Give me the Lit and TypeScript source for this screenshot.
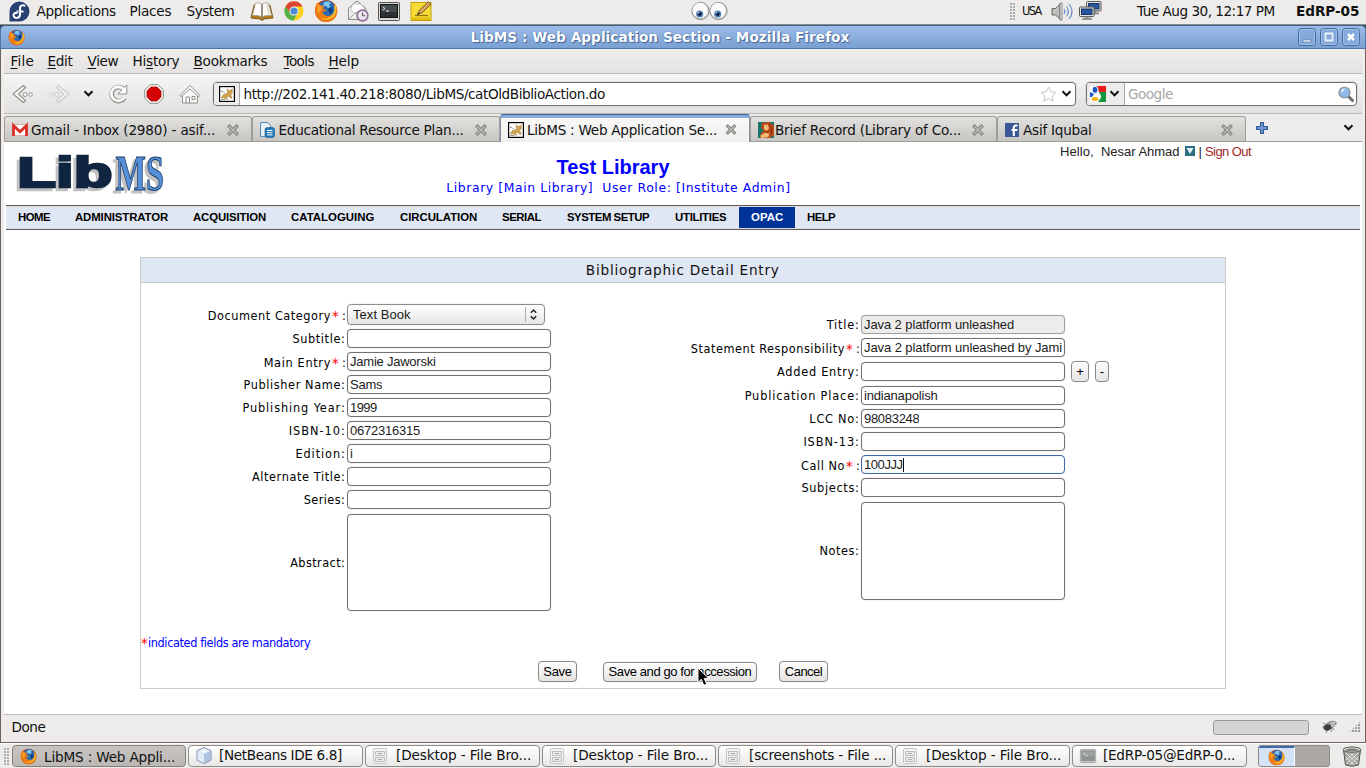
import { LitElement, html, svg, css, nothing, TemplateResult } from "lit";
import { customElement } from "lit/decorators.js";

const FONTS: Record<string, string> = {
  ui: '13.6px "DejaVu Sans"',
  uib: 'bold 13.6px "DejaVu Sans"',
  sub: '12.4px "DejaVu Sans"',
  cond: '12.6px "DejaVu Sans Condensed"',
  arial: '13px "Liberation Sans"',
  nav: 'bold 11.4px "Liberation Sans"',
  big: 'bold 20px "Liberation Sans"',
};

const pen = document.createElement("canvas").getContext("2d")!;

/* One run of text, tracked so that its glyphs span exactly `width` pixels. */
function run(text: string, width: number, font: string, body: unknown = text) {
  pen.font = FONTS[font];
  const m = pen.measureText(text);
  const ink = m.actualBoundingBoxRight + m.actualBoundingBoxLeft;
  const gap = text.length > 1 ? (width - ink) / (text.length - 1) : 0;
  return html`<span class="run ${font}" style="letter-spacing:${gap.toFixed(3)}px;margin-left:${m.actualBoundingBoxLeft.toFixed(2)}px">${body}</span>`;
}

/* A fixed-width cell of a bar. */
const cell = (w: number, body: unknown = nothing) =>
  html`<span class="cell" style="width:${w}px">${body}</span>`;

const icon = (w: number, h: number, body: TemplateResult, vb = `0 0 ${w} ${h}`) =>
  html`<svg class="icon" width=${w} height=${h} viewBox=${vb}>${body}</svg>`;

const firefox = (s: number) => icon(s, s, svg`
  <circle cx="12" cy="12" r="11" fill="#c8420c"/>
  <circle cx="12.6" cy="9.8" r="8.4" fill="#2a6cb4"/>
  <path d="M10 3.500q4-2 7 .4l-2 2 1.500 2-2.500 1-2-2-3 0z" fill="#7fc4ee"/>
  <path d="M14 10l4-2 1 4-3 3z" fill="#123c80"/>
  <path d="M3.200 3.500C.4 8 .2 15 4 19.400c4.500 5 13.500 4.600 17.300-.8 3-4.400 2.700-10-.5-13.600 1 3.500.7 6.500-.8 8.500-1.500 2.700-4.500 4-7.500 3.300-3-.7-4.300-2.800-3.800-4.800 1.300.8 3 .5 3.800-.8l-3.500-1.700 1.200-2.500-3.200-.6z" fill="#ee7b12"/>
  <path d="M21.500 6c1.800 5 .5 10.500-4 13.300-3.500 2-8 1.700-11-.6 4.500 1.600 9.500.6 12-3.200 1.800-2.600 2.500-5.500 1.500-8.500z" fill="#fbbf2c"/>
  <path d="M3.500 5.500l3.200 1.500.8 2.200-1.500 3-2.500 2z" fill="#f6a22b"/>`, "0 0 24 24");

const fedora = icon(21, 21, svg`
  <path d="M10.500.5a10 10 0 0 1 0 20H.5v-10a10 10 0 0 1 10-10z" fill="#294172"/>
  <path d="M16 5.300C14.500 3.500 11 4 11 7.300v6c0 5-6.500 4.200-6.500 1 0-2.600 3-2.800 4.200-2.100M7.500 10.600h7" fill="none" stroke="#fff" stroke-width="2"/>
  <path d="M8 10.600h3" stroke="#9db8dd" stroke-width="1.500"/>`);

const book = icon(24, 20, svg`
  <path d="M1 17L4 4h16l3 13-9 1-2 1.500-2-1.500z" fill="#b07a1c" stroke="#6b480c" stroke-width=".8"/>
  <path d="M2.500 14.500L5.500 2q4-1 6.500 1.300Q14.500 1 18.500 2l3 12.500q-6-1-9.500 1.700-3.500-2.700-9.500-1.700z" fill="#fbfaf6" stroke="#a49c86" stroke-width=".7"/>
  <path d="M6 3.500q3-.8 5 .6v10.500q-3-1.500-7-1z" fill="#fff"/>
  <path d="M12 3.300v13" stroke="#6c6450" stroke-width="1.400"/>
  <path d="M17 2l2 11.500" stroke="#cfcabb" stroke-width="1"/>`);

const chrome = icon(20, 20, svg`
  <circle cx="10" cy="10" r="9.500" fill="#fbd11a"/>
  <path d="M1.500 5.500A9.500 9.500 0 0 1 18.400 5.500H10L6 12z" fill="#df4432"/>
  <path d="M1.500 5.500A9.500 9.500 0 0 0 9.500 19.500L13.700 12 6.200 12z" fill="#54b048"/>
  <circle cx="10" cy="10" r="4.600" fill="#f3f3f3"/><circle cx="10" cy="10" r="3.600" fill="#4a88d0"/>`);

const mail = icon(22, 22, svg`
  <path d="M1.500 8.500L9 1.500h2l8 7v11h-17.500z" fill="#eeeeec" stroke="#888a85"/>
  <path d="M4 8l2-4h8l3 4v4l-6 3-7-4z" fill="#fff" stroke="#b5b5b2" stroke-width=".8"/>
  <path d="M2 19l6.500-6.500h4L18 19" fill="none" stroke="#a5a7a3"/>
  <circle cx="15.500" cy="15.500" r="5.400" fill="#ece6ef" stroke="#8c6f93" stroke-width="1.600"/>
  <path d="M15.500 12.500v3.200h2.700" fill="none" stroke="#555" stroke-width="1"/>`);

const terminal = (w = 22, h = 19, dim = false) => icon(w, h, svg`
  <rect x=".5" y=".5" width="21" height="18" rx="1" fill=${dim ? "#c5c6c3" : "#d8d9d6"} stroke=${dim ? "#9a9b98" : "#555753"}/>
  <rect x="2.500" y="2.500" width="17" height="13" fill=${dim ? "#8c9391" : "#2c3233"} stroke=${dim ? "#888" : "#111"}/>
  <path d="M3 10h16V3H3z" fill=${dim ? "#9aa19f" : "#454d4e"}/>
  <path d="M5 5l2 1.500L5 8M8 9h3" fill="none" stroke="#eee" stroke-width="1"/>`, "0 0 22 19");

const note = icon(23, 21, svg`
  <rect x="1" y="1.500" width="20" height="18" fill="#f6dc35" stroke="#c3a106"/>
  <path d="M1.500 16.500h19v2.500h-19z" fill="#e3bd12"/>
  <path d="M5 14.500h13" stroke="#8b7513" stroke-width="1.300"/>
  <path d="M7.500 13.500l2-4.500L18.500.8l2.500 2.400-9 8.500z" fill="#d9a760" stroke="#6b4a14" stroke-width=".9"/>
  <path d="M7.300 13.700l1-2.200 1.300 1.200z" fill="#222"/>`);

const eyes = icon(38, 20, svg`${[9.500, 27.500].map((x) => svg`
  <circle cx=${x} cy="10" r="8.600" fill="#cfcfcd" stroke="#8b8b88"/>
  <circle cx=${x - 0.4} cy="9.400" r="7.600" fill="#fbfbfa"/>
  <circle cx=${x - 0.8} cy="13" r="3.600" fill="#5583bd"/>
  <circle cx=${x - 0.8} cy="13" r="2" fill="#10213c"/>
  <circle cx=${x - 2} cy="11.800" r=".8" fill="#e7eef8"/>`)}`);

const speaker = icon(22, 19, svg`
  <path d="M1 6.500h3.500L9 2v15l-4.500-4H1z" fill="#bfc0bd" stroke="#666863"/>
  <path d="M9 1h2v17H9z" fill="#f2f2f0" stroke="#777974" stroke-width=".9"/>
  <path d="M13 7q2 2.500 0 5M15.500 4.500q3.800 5 0 10M18 2q6 7.500 0 15" fill="none" stroke="#6d93c7" stroke-width="1.200"/>`);

const network = icon(23, 20, svg`${[[7, 0], [0, 5.5]].map(([x, y]) => svg`<g transform="translate(${x} ${y})">
  <rect x=".5" y=".5" width="14.500" height="9.500" rx="1" fill="#e4e4e1" stroke="#555753"/>
  <rect x="2.500" y="2.500" width="10.500" height="5.500" fill="#2b55a0" stroke="#173468"/>
  <path d="M3 12.500h10M5.500 10.500h5" stroke="#777974" stroke-width="1.500"/></g>`)}`);

const chevron = icon(11, 7, svg`<path d="M1.500 1.300l4 4 4-4" fill="none" stroke="#111" stroke-width="2"/>`);

const backArrow = svg`
  <path d="M12.500 1.500L2 10l10.500 8.500L14.500 16.500 7.500 10l7-6.500z" fill="#fbfbfa" stroke="#8e908b" stroke-width="1.100" stroke-linejoin="round"/>
  <circle cx="14" cy="10.500" r="2" fill="#fff" stroke="#8e908b"/><circle cx="19.500" cy="10.500" r="1.800" fill="#fff" stroke="#8e908b"/>`;
const back = icon(23, 20, backArrow);
const forward = icon(23, 20, svg`<g transform="translate(23 0) scale(-1 1)" opacity=".35">${backArrow}</g>`);

const reload = icon(20, 20, svg`
  <path d="M15.500 5A7 7 0 1 0 16.500 14" fill="none" stroke="#8e908b" stroke-width="4.800"/>
  <path d="M18.800 1v9h-9z" fill="#fff" stroke="#8e908b" stroke-linejoin="round"/>
  <path d="M15.500 5A7 7 0 1 0 16.200 13.600" fill="none" stroke="#fbfbfa" stroke-width="2.800"/>`);

const stop = icon(20, 20, svg`
  <path d="M6 .7h8L19.300 6v8L14 19.300H6L.7 14V6z" fill="#f6f6f5" stroke="#8e908b"/>
  <path d="M7 3h6l4 4v6l-4 4H7l-4-4V7z" fill="#d40404" stroke="#a50000" stroke-width=".7"/>`);

const home = icon(22, 20, svg`
  <path d="M3.500 10v9h15v-9L11 3.500z" fill="#fafaf9" stroke="#8e908b"/>
  <path d="M1 11.500L11 1.500l10 10-1.500 1L11 4.800 2.500 12.500z" fill="#fff" stroke="#8e908b" stroke-linejoin="round"/>
  <path d="M7 19v-6h3.500v6M13 12.500h3v3h-3z" fill="none" stroke="#8e908b"/>`);

const tomcat = icon(16, 16, svg`
  <rect x=".6" y=".6" width="14.800" height="14.800" fill="#fff" stroke="#000" stroke-width="1.200"/>
  <path d="M2 12l2.500-3.500L8 7.500 8.500 6 8 2.800l1.800 1.400h1.700l1.700-1.400.2 4.200-1.600 1.500 1.400 3.500-1.200.4-2.500-2-2.500.4 2 2.200-1.500.3-3-1.500z" fill="#d2a44e" stroke="#8a6a30" stroke-width=".4"/>
  <path d="M1.500 5q3 0 4 2M2 13.500h4" stroke="#777" stroke-width=".8" fill="none"/>`);

const gmail = icon(16, 12, svg`
  <rect x=".5" y=".5" width="15" height="11" fill="#fff" stroke="#d9b2ae"/>
  <path d="M1.500 12V1.500L8 7.800l6.500-6.300V12" fill="none" stroke="#da2f27" stroke-width="2.800"/>`);

const docs = icon(15, 16, svg`
  <path d="M.6.600h7l3 3v10.800h-10z" fill="#eef5fa" stroke="#4b87b4"/>
  <rect x="5" y="5.500" width="9.500" height="10" rx="2" fill="#2379b6" stroke="#155c92" stroke-width=".6"/>
  <path d="M7 8.500h5.500M7 10.700h5.500M7 12.900h5.500" stroke="#fff" stroke-width="1"/>`);

const loc = icon(16, 16, svg`
  <rect width="16" height="16" fill="#19746c"/>
  <path d="M4 1l7-1 5 4v9l-4 3H2l1-5 3-3-3-2z" fill="#c04a16"/>
  <path d="M6 3l3.500-.5 1.500 3.500-2.500 3-2.500-2zM2 14l6-4 4 1-2 4-6 1z" fill="#f3bd78"/>
  <path d="M11 2l3 5-2 6M7 10l4 1" stroke="#7a2407" fill="none"/>`);

const facebook = icon(14, 14, svg`
  <rect width="14" height="14" fill="#3b5998"/>
  <path d="M12.500 2.500H11q-2.200 0-2.200 2.500V13M6.500 7h6" stroke="#fff" stroke-width="2" fill="none"/>`);

const closeTab = icon(12, 12, svg`
  <path d="M2.500 2.500l7 7M9.500 2.500l-7 7" stroke="#858682" stroke-width="3.400" stroke-linecap="square"/>
  <path d="M2.500 2.500l7 7M9.500 2.500l-7 7" stroke="#bfbfbc" stroke-width="1.200" stroke-linecap="square"/>`);

const plus = icon(12, 12, svg`<path d="M4.500.5h3v4h4v3h-4v4h-3v-4h-4v-3h4z" fill="#6d9bd4" stroke="#244f91"/>`);

const star = icon(17, 16, svg`<path d="M8.500 1l2.200 4.800 5.200.6-3.800 3.600 1 5.200-4.600-2.600-4.600 2.600 1-5.200L1 6.400l5.200-.6z" fill="#fff" stroke="#c3c3c1"/>`);

const google = icon(16, 16, svg`
  <rect width="16" height="16" fill="#fff"/>
  <path d="M6 0h10v6H9z" fill="#ea1c1c"/><path d="M9 6h7v10H8l3-5z" fill="#12963f"/>
  <path d="M0 6l4 2-2 3H0z" fill="#1657c4"/>
  <path d="M5 7.500q7 1 4 5" stroke="#fff" stroke-width="2.200" fill="none"/>
  <ellipse cx="5" cy="3.800" rx="3" ry="3.600" fill="#1657c4" stroke="#fff"/>
  <ellipse cx="5" cy="13" rx="4" ry="2.600" fill="#f5b312" stroke="#fff"/>`);

const glass = icon(16, 16, svg`
  <path d="M10.500 10.500l4 4" stroke="#6b6d68" stroke-width="3" stroke-linecap="round"/>
  <circle cx="6.500" cy="6.500" r="5.500" fill="#8fb9ea" stroke="#8e908b" stroke-width="1.200"/>
  <path d="M3.500 6q.5-2.500 3-2.700" stroke="#fff" fill="none" stroke-width="1.300"/>`);

const netbeans = icon(16, 17, svg`
  <path d="M8 .7l7 3v9.500l-7 3.300-7-3.300V3.700z" fill="#c9daec" stroke="#7988a8"/>
  <path d="M1.500 4L8 7v9l-6.500-3z" fill="#dfeaf5"/><path d="M8 7l6.500-3v9L8 16z" fill="#adc4de"/>
  <path d="M2 3.800L8 1.500l6 2.300L8 6.500z" fill="#eef5fb"/>`);

const cabinet = icon(14, 16, svg`
  <rect x=".5" y=".5" width="13" height="15" rx="1" fill="#f4f4f3" stroke="#c4c5c2"/>
  <path d="M2.500 3.500h9v4h-9zM2.500 9.500h9v4h-9z" fill="#eaeae8" stroke="#bcbdba"/>
  <path d="M5 5.500h4M5 11.500h4" stroke="#a9aaa7" stroke-width="1.200"/>`);

const bug = icon(17, 14, svg`
  <path d="M1 7l5-1M2 3l4 2M5 13l2-4M10 12l1-4M13 10l-2-3" stroke="#8c8c8c" fill="none"/>
  <ellipse cx="10" cy="4.500" rx="5.500" ry="3" transform="rotate(-18 10 4.500)" fill="#9b9c9a" stroke="#77787a" stroke-width=".6"/>
  <ellipse cx="6.500" cy="7.500" rx="4" ry="3" transform="rotate(-15 6.500 7.500)" fill="#3c3c3c"/>
  <path d="M9 4l5-1.500M10 6l4-1" stroke="#e2e2e2"/>`);

const trash = icon(20, 21, svg`
  <path d="M1.500 4l2 15q6.500 2.400 13 0l2-15z" fill="#a3a5a0" stroke="#555753"/>
  <path d="M4 7l12 11M4 11l8 8M7 6l9 8M16 7L4 18M16 11l-8 8M13 6l-9 8" stroke="#e9eae8" stroke-width=".9"/>
  <ellipse cx="10" cy="3.600" rx="9" ry="2.600" fill="#d6d7d4" stroke="#555753"/>
  <ellipse cx="10" cy="3.800" rx="6.500" ry="1.300" fill="#777974"/>`);

const grip = html`<i class="grip"></i>`;

const winButton = (glyph: TemplateResult) => icon(18, 18, svg`
  <rect x=".5" y=".5" width="17" height="17" rx="3" fill="#84a9da" stroke="#44699c"/>
  <rect x="1.500" y="1.500" width="15" height="15" rx="2" fill="none" stroke="#a3c0e8"/>${glyph}`);

const logo = html`<svg class="logo" width="160" height="50" viewBox="0 0 160 50">
  <text class="lib" transform="translate(1.300 33.500) scale(1.510 1)" fill="#10253f" stroke="#10253f" stroke-width="2.400">Lib</text>
  <text class="ms" transform="translate(99.500 37) scale(.645 1)" fill="#5590d8" stroke="#1b3a66" stroke-width="1">MS</text></svg>`;

const NAV: [string, number, number][] = [
  ["HOME", 57, 33], ["ADMINISTRATOR", 118, 93], ["ACQUISITION", 98, 73], ["CATALOGUING", 109, 83.5],
  ["CIRCULATION", 102, 77], ["SERIAL", 65, 39.5], ["SYSTEM SETUP", 108, 83], ["UTILITIES", 76, 52],
  ["OPAC", 56, 32], ["HELP", 53, 29],
];

interface Field { label: string; w: number; star?: boolean; value?: string; vw?: number; kind?: string }

const LEFT: Field[] = [
  { label: "Document Category", w: 122, star: true, value: "Text Book", vw: 58, kind: "select" },
  { label: "Subtitle", w: 48 },
  { label: "Main Entry", w: 66, star: true, value: "Jamie Jaworski", vw: 86 },
  { label: "Publisher Name", w: 96, value: "Sams", vw: 33 },
  { label: "Publishing Year", w: 97, value: "1999", vw: 27 },
  { label: "ISBN-10", w: 50, value: "0672316315", vw: 70 },
  { label: "Edition", w: 43.5, value: "i", vw: 1 },
  { label: "Alternate Title", w: 88.5 },
  { label: "Series", w: 37 },
  { label: "Abstract", w: 51, kind: "area" },
];

const RIGHT: Field[] = [
  { label: "Title", w: 28.5, value: "Java 2 platform unleashed", vw: 150, kind: "off" },
  { label: "Statement Responsibility", w: 154, star: true, value: "Java 2 platform unleashed by Jamie", vw: 205 },
  { label: "Added Entry", w: 77.5, kind: "add" },
  { label: "Publication Place", w: 108.5, value: "indianapolish", vw: 73.5 },
  { label: "LCC No", w: 44, value: "98083248", vw: 55.5 },
  { label: "ISBN-13", w: 49.5 },
  { label: "Call No", w: 43.5, star: true, value: "100JJJ", vw: 38.5, kind: "focus" },
  { label: "Subjects", w: 53 },
  { label: "Notes", w: 34, kind: "area" },
];

const TABS: [TemplateResult, number, string, number, number][] = [
  [gmail, 248, "Gmail - Inbox (2980) - asif...", 183, 19],
  [docs, 248, "Educational Resource Plan...", 183, 19.5],
  [tomcat, 250, "LibMS : Web Application Se...", 188, 20],
  [loc, 247, "Brief Record (Library of Co...", 184, 18],
  [facebook, 249, "Asif Iqubal", 68, 18],
];

const TASKS: [TemplateResult, number, string, number, number][] = [
  [firefox(17), 174, "LibMS : Web Appli...", 129, 24.5],
  [netbeans, 175, "[NetBeans IDE 6.8]", 122, 23.5],
  [cabinet, 175, "[Desktop - File Bro...", 133, 23.5],
  [cabinet, 174, "[Desktop - File Bro...", 133, 23.5],
  [cabinet, 175, "[screenshots - File ...", 135, 23.5],
  [cabinet, 175, "[Desktop - File Bro...", 133, 23.5],
  [terminal(16, 14, true), 175, "[EdRP-05@EdRP-0...", 130, 23.5],
];

@customElement("app-root")
export class AppRoot extends LitElement {
  static styles = css`
    :host { display: flex; flex-direction: column; width: 1366px; height: 768px; overflow: hidden; position: relative; background: #edeceb; color: #111; box-sizing: border-box; }
    * { box-sizing: border-box; }
    .icon { display: block; flex: none; overflow: visible; }
    .run { white-space: pre; display: inline-block; flex: none; }
    .ui { font: 13.6px/18px "DejaVu Sans", sans-serif; padding-left: .5px; }
    .uib { font: bold 13.6px/18px "DejaVu Sans", sans-serif; padding-left: .5px; }
    .sub { font: 12.4px/16px "DejaVu Sans", sans-serif; }
    .cond { font: 12.6px/16px "DejaVu Sans Condensed", "DejaVu Sans", sans-serif; }
    .arial { font: 13px/16px "Liberation Sans", sans-serif; }
    .nav { font: bold 11.4px/14px "Liberation Sans", sans-serif; }
    .big { font: bold 20px/24px "Liberation Sans", sans-serif; }
    .cell { display: flex; align-items: center; flex: none; }
    .grow { flex: 1; }
    .grip { display: block; width: 5px; height: 17px; background: radial-gradient(circle at 1px 1px, #a9a8a6 .7px, transparent .8px) 0 0 / 3px 3px; }
    u { text-decoration: underline; text-underline-offset: 2px; text-decoration-thickness: 1px; }

    .panel { display: flex; align-items: center; height: 25px; padding: 0 0 2px 9px; border-bottom: 1px solid #8b8a86; background: #edeceb; flex: none; }
    .window { display: flex; flex-direction: column; height: 718px; flex: none; background: #2c5169; }
    .title { display: flex; align-items: center; height: 24px; padding: 0 5px 0 7px; border: 1px solid #4c76a9; border-top-color: #3e5f86; background: linear-gradient(#9cbce8, #7aa0d2); border-radius: 5px 5px 0 0; flex: none; }
    .title .uib { color: #fff; text-shadow: 0 0 1px #40659a, 1px 1px 1px #40659a; }
    .frame { display: flex; flex-direction: column; flex: 1; border-left: 1px solid #6c6460; border-right: 1px solid #6c6460; border-bottom: 1px solid #6c6460; background: #edeceb; padding: 0 3px; }
    .menu { display: flex; align-items: center; height: 25px; padding: 0 0 1px 7px; border-bottom: 1px solid #bab9b6; background: linear-gradient(#efeeed, #e3e2e0); flex: none; }
    .tools { display: flex; align-items: center; height: 40px; padding-left: 7px; border-bottom: 1px solid #bab9b6; background: linear-gradient(#f6f6f5, #e1e0de); flex: none; }
    .tools .ui, .tabs .ui { padding-top: 1px; }
    .entry { display: flex; align-items: center; height: 24px; border: 1px solid #73716e; border-radius: 4px; background: #fff; box-shadow: 0 0 0 1px #dcdbd9; overflow: hidden; flex: none; }
    .site { display: flex; align-items: center; justify-content: center; width: 26px; height: 22px; border-right: 1px solid #a9a8a6; background: #edeceb; flex: none; }
    .engine { display: flex; align-items: center; width: 38px; height: 22px; padding-left: 3px; gap: 3px; border-right: 1px solid #a9a8a6; background: #edeceb; flex: none; }
    .dim { display: flex; color: #a6a6a6; }
    .tabs { display: flex; align-items: flex-end; height: 28px; border-bottom: 1px solid #9d9c99; flex: none; }
    .tab { display: flex; align-items: center; height: 25px; padding: 1px 12px 0 7px; border: 1px solid #9d9c99; border-bottom: 0; border-radius: 3px 3px 0 0; background: linear-gradient(#e2e1df, #c6c5c2); flex: none; }
    .tab.on { height: 28px; margin-bottom: -1px; padding-top: 1px; border: 1px solid #8493a9; border-top: 1px solid #3c659c; border-bottom: 0; background: linear-gradient(#86abdc 0 3px, #f8f8f7 3px, #f0efee); }
    .tab.on > .cell, .tab.on > .icon { padding-top: 1px; }
    .tabend { display: flex; align-items: center; height: 25px; flex: 1; padding: 0 8px 2px 10px; justify-content: space-between; }
    .page { flex: 1; background: #fff; padding: 0 2px; display: flex; flex-direction: column; }
    .head { display: grid; grid-template-columns: 376px 500px 1fr; height: 63px; flex: none; }
    .logo { display: block; margin: 11px 0 0 10px; overflow: visible; filter: drop-shadow(-3px 3px 0 #c2c2c2); }
    .lib { font: bold 42px "Liberation Sans", sans-serif; }
    .ms { font: bold 50px "Liberation Serif", serif; }
    .center { display: flex; flex-direction: column; align-items: center; padding: 13px 38px 0 0; color: #0000ff; }
    .center .sub { padding: 1px 0 0 12px; }
    .who { display: flex; padding: 2px 0 0 179px; align-items: flex-start; color: #222; }
    .out { display: flex; color: #a52a2a; }
    .drop { display: block; width: 10px; height: 10px; margin-top: 2px; background: #2d6f83; }
    .navbar { display: flex; height: 25px; border-top: 1px solid #5f5b5b; border-bottom: 1px solid #5f5b5b; background: #e0e7f4; box-shadow: inset 0 1px #e0d8da, inset 0 -1px #e0d8da; padding: 1px 0; flex: none; }
    .item { display: flex; align-items: center; padding: 0 0 1px 12px; flex: none; color: #000; }
    .item.on { background: #003399; color: #fff; }
    .form { display: flex; flex-direction: column; width: 1086px; height: 432px; margin: 27px 0 0 134px; border: 1px solid #cacaca; flex: none; }
    .caption { display: flex; justify-content: center; align-items: center; height: 25px; border-bottom: 1px solid #cacaca; background: #e0e7f4; flex: none; }
    .cols { display: flex; gap: 14px; height: 352px; }
    .col { display: flex; flex-direction: column; gap: 4px; padding-top: 21px; width: 500px; }
    .col.r { padding-top: 32px; }
    .row { display: grid; grid-template-columns: 206px auto; align-items: center; justify-content: start; height: 19px; flex: none; }
    .row.select, .row.add { height: 21px; }
    .row.area { height: 97px; margin-top: 1px; }
    .r .row.area { height: 98px; }
    .label { display: flex; justify-content: flex-end; padding-right: 4px; color: #000; }
    .label.star { padding: 2px 3px 0 0; }
    .colon { display: flex; width: 2px; flex: none; }
    .mark { color: #f00; font: 13.6px/16px "DejaVu Sans", sans-serif; }
    .ast { display: flex; width: 11px; padding-left: 1px; flex: none; }
    .ctl { display: flex; align-items: center; width: 204px; height: 19px; padding: 0 2px; border: 1px solid #73716e; border-radius: 4px; background: #fff; box-shadow: 0 0 1px #b8b6b4; color: #1c1c1c; }
    .ctl.area { height: 100%; }
    .ctl.off { background: #edeceb; border-color: #a3a19e; }
    .ctl.focus { border-color: #3f68a6; box-shadow: inset 0 0 1px #9ab5dc; }
    .ctl.select { width: 198px; height: 21px; padding: 0 0 0 5px; border-color: #8e8c89; background: linear-gradient(#fff, #e6e5e3); justify-content: space-between; }
    .val { display: flex; max-width: 198px; overflow: hidden; }
    .spin { display: flex; align-items: center; padding-left: 4px; height: 15px; width: 19px; border-left: 1px solid #b4b2af; }
    .caret { width: 1px; height: 14px; background: #000; flex: none; }
    .addset { display: flex; align-items: center; gap: 6px; }
    .btn { display: flex; align-items: center; justify-content: center; height: 21px; border: 1px solid #8e8c89; border-radius: 4px; background: linear-gradient(#fff, #e4e3e1); box-shadow: 0 0 1px #b8b6b4; color: #000; flex: none; }
    .note { display: flex; height: 16px; padding-left: 0; color: #0000ff; flex: none; }
    .actions { display: flex; align-items: flex-end; padding-top: 10px; margin-left: 397px; height: 31px; }
    .status { display: flex; align-items: center; height: 28px; padding: 0 1px 4px 8px; border-top: 1px solid #bab9b6; flex: none; }
    .meter { width: 96px; height: 15px; border: 1px solid #9b9a97; border-radius: 3px; background: #d5d4d2; margin-top: 2px; }
    .size { width: 12px; height: 12px; clip-path: polygon(100% 0, 100% 100%, 0 100%); background: radial-gradient(circle at 1px 1px, #9a9997 .8px, transparent .9px) 0 0 / 3px 3px; }
    .tasks { display: flex; align-items: center; height: 25px; padding: 0 4px; border-top: 1px solid #fff; flex: none; }
    .task { display: flex; align-items: center; height: 22px; margin-right: 2px; padding: 0 0 1px 7px; border: 1px solid #8e8c89; border-radius: 4px; background: linear-gradient(#fff, #e9e8e6); flex: none; }
    .task .ui { padding-bottom: 1px; }
    .task.on { background: linear-gradient(#c6c3c0, #bcb8b5); padding-top: 1px; padding-bottom: 0; border-color: #83807c; }
    .task.on .ui { padding-bottom: 0; }
    .desks { display: flex; width: 73px; height: 22px; margin-left: 9px; border: 1px solid #8e8c89; border-radius: 3px; background: #aba8a5; overflow: hidden; }
    .desk { display: flex; align-items: center; justify-content: center; width: 36px; background: #d3e2f6; border-top: 2px solid #3e6cab; border-right: 1px solid #fff; }
    .cursor { position: absolute; left: 697px; top: 667px; }
  `;

  private field(f: Field) {
    const kind = f.kind ?? "";
    const value = f.value ? html`<span class="val">${run(f.value, f.vw!, "arial")}</span>` : nothing;
    const box = html`<div class="ctl ${kind}">${value}${kind === "focus" ? html`<i class="caret"></i>` : nothing}
      ${kind === "select" ? html`<span class="spin">${icon(7, 11, svg`<path d="M.8 3.800L3.500 1l2.700 2.800M.8 7.200L3.500 10l2.700-2.800" fill="none" stroke="#222" stroke-width="1.500"/>`)}</span>` : nothing}</div>`;
    return html`<div class="row ${kind}">
      <div class="label ${f.star ? "star" : ""}">${run(f.label, f.w, "cond")}${f.star ? html`<span class="ast mark">*</span>` : nothing}<span class="colon cond">:</span></div>
      ${kind === "add" ? html`<div class="addset">${box}${this.button("+", 18, 7)}${this.button("-", 14, 4)}</div>` : box}
    </div>`;
  }

  private button(text: string, w: number, tw: number, short = false) {
    return html`<div class="btn" style="width:${w}px;height:${short ? 20 : 21}px">${run(text, tw, "arial")}</div>`;
  }

  render() {
    const menu = (key: string, rest: string, box: number, w: number, pre = "") =>
      cell(box, run(pre + key + rest, w, "ui", html`${pre}<u>${key}</u>${rest}`));
    return html`
      <div class="panel">
        ${cell(27, fedora)}${cell(94, run("Applications", 79.5, "ui"))}${cell(56, run("Places", 41, "ui"))}${cell(64, run("System", 48, "ui"))}
        ${cell(34, book)}${cell(30, chrome)}${cell(33, firefox(24))}${cell(31, mail)}${cell(32, terminal())}${note}
        <span class="grow"></span>${cell(319, eyes)}
        ${cell(12, grip)}${cell(29, run("USA", 20.5, "cond"))}${cell(28, speaker)}${cell(56.5, network)}
        ${cell(161, run("Tue Aug 30, 12:17 PM", 138.5, "ui"))}${cell(69.5, run("EdRP-05", 62, "uib"))}
      </div>
      <div class="window">
        <div class="title">
          ${cell(463, firefox(17))}${run("LibMS : Web Application Section - Mozilla Firefox", 378, "uib")}<span class="grow"></span>
          ${cell(22, winButton(svg`<path d="M5 12h8v2H5z" fill="#fff" stroke="#44699c" stroke-width=".6"/>`))}
          ${cell(22, winButton(svg`<path d="M5.500 5.500h7v7h-7z" fill="none" stroke="#e8f0fa" stroke-width="1.800"/>`))}
          ${cell(18, winButton(svg`<path d="M6 6l6 6M12 6l-6 6" stroke="#fff" stroke-width="2.600"/>`))}
        </div>
        <div class="frame">
          <div class="menu">
            ${menu("F", "ile", 37, 22)}${menu("E", "dit", 39, 24)}${menu("V", "iew", 46, 31)}${menu("s", "tory", 61, 46, "Hi")}
            ${menu("B", "ookmarks", 88, 73)}${menu("T", "ools", 47, 32)}${menu("H", "elp", 40, 29)}
          </div>
          <div class="tools">
            ${cell(37, back)}${cell(35, forward)}${cell(25, chevron)}${cell(36, reload)}${cell(35, stop)}${cell(34, home)}
            <div class="entry" style="width:863px">
              <span class="site">${tomcat}</span>${cell(4)}${cell(796, run("http://202.141.40.218:8080/LibMS/catOldBiblioAction.do", 360.5, "ui"))}
              ${cell(21, star)}${chevron}
            </div>
            ${cell(10)}
            <div class="entry" style="width:271px">
              <span class="engine">${google}${chevron}</span>${cell(2.5)}${cell(210.5, html`<span class="dim">${run("Google", 45, "ui")}</span>`)}${glass}
            </div>
          </div>
          <div class="tabs">
            ${TABS.map(([ic, w, text, tw, pad], i) => html`<div class="tab ${i === 2 ? "on" : ""}" style="width:${w}px">
              ${cell(pad - 0.5, ic)}${run(text, tw, "ui")}<span class="grow"></span>${closeTab}</div>`)}
            <div class="tabend">${plus}${chevron}</div>
          </div>
          <div class="page">
            <div class="head">
              ${logo}
              <div class="center">${run("Test Library", 114, "big")}${run("Library [Main Library]  User Role: [Institute Admin]", 342, "sub")}</div>
              <div class="who">${cell(41, run("Hello,", 32, "arial"))}${cell(83, run("Nesar Ahmad", 78, "arial"))}
                <i class="drop"><svg class="icon" width="10" height="10"><path d="M1.500 2h7L5 8z" fill="#e6f1f5"/></svg></i>
                ${cell(3.5)}${cell(6.5, html`<span class="arial">|</span>`)}<span class="out">${run("Sign Out", 47, "arial")}</span></div>
            </div>
            <div class="navbar">
              ${NAV.map(([text, w, tw]) => html`<div class="item ${text === "OPAC" ? "on" : ""}" style="width:${w}px">${run(text, tw, "nav")}</div>`)}
            </div>
            <div class="form">
              <div class="caption">${run("Bibliographic Detail Entry", 192, "ui")}</div>
              <div class="cols">
                <div class="col">${LEFT.map((f) => this.field(f))}</div>
                <div class="col r">${RIGHT.map((f) => this.field(f))}</div>
              </div>
              <div class="note">${cell(8, html`<span class="mark">*</span>`)}${run("indicated fields are mandatory", 162, "cond")}</div>
              <div class="actions">${this.button("Save", 39, 28.5)}${cell(26)}${this.button("Save and go for accession", 154, 143, true)}${cell(22)}${this.button("Cancel", 49, 38)}</div>
            </div>
          </div>
          <div class="status">${run("Done", 33, "ui")}<span class="grow"></span>${cell(108, html`<i class="meter"></i>`)}${cell(28, bug)}<i class="size"></i></div>
        </div>
      </div>
      <div class="tasks">
        ${cell(8, grip)}
        ${TASKS.map(([ic, w, text, tw, pad], i) => html`<div class="task ${i === 0 ? "on" : ""}" style="width:${w}px">${cell(pad, ic)}${run(text, tw, "ui")}</div>`)}
        <div class="desks"><span class="desk">${firefox(17)}</span></div>
        ${cell(12)}${trash}
      </div>
      <svg class="cursor" width="14" height="20" viewBox="0 0 14 20">
        <path d="M1 1v14.500l3.300-3.200 2.500 6 2.900-1.200-2.500-5.700h4.600z" fill="#000" stroke="#fff" stroke-width="1"/>
      </svg>
    `;
  }
}
